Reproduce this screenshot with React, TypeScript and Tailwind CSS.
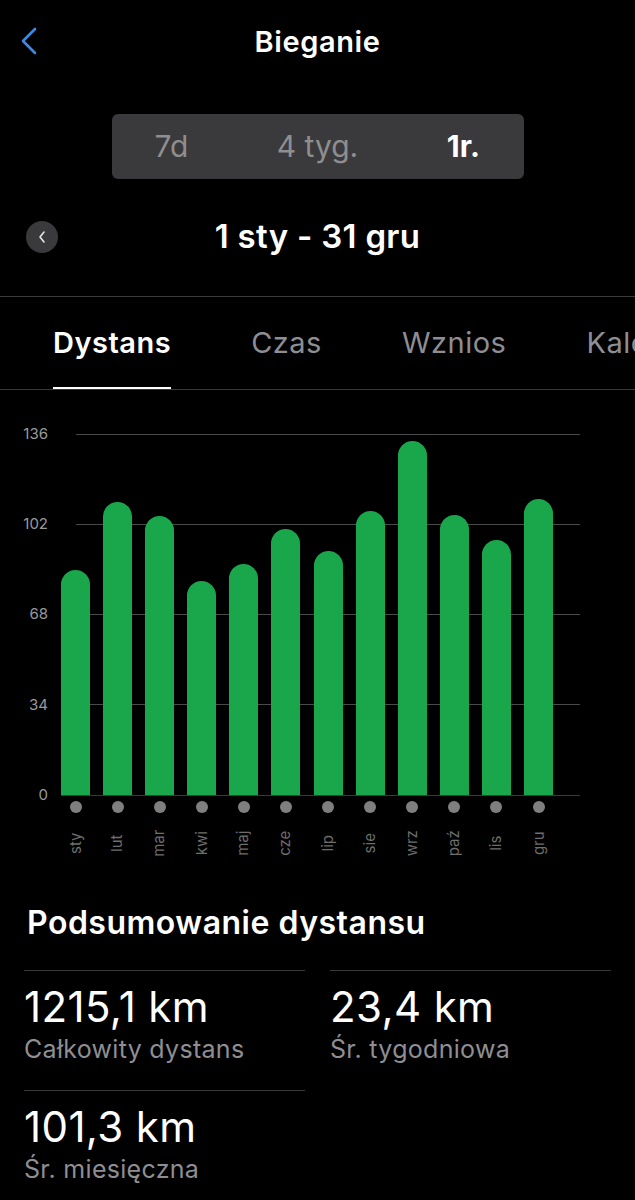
import React from "react";

const months = [
  { name: "sty", value: 84.7 },
  { name: "lut", value: 110.5 },
  { name: "mar", value: 105.2 },
  { name: "kwi", value: 80.7 },
  { name: "maj", value: 87 },
  { name: "cze", value: 100.3 },
  { name: "lip", value: 92 },
  { name: "sie", value: 107 },
  { name: "wrz", value: 133.3 },
  { name: "paź", value: 105.6 },
  { name: "lis", value: 96.2 },
  { name: "gru", value: 111.7 },
];

const ticks = [136, 102, 68, 34, 0];
const PX_PER_UNIT = 361 / 136;

function BackChevron() {
  return (
    <svg width="18" height="28" viewBox="0 0 18 28" fill="none">
      <polyline
        points="15,2 3,14 15,26"
        stroke="#3d8be6"
        strokeWidth="2.6"
        strokeLinecap="round"
        strokeLinejoin="round"
      />
    </svg>
  );
}

function SmallChevron() {
  return (
    <svg width="10" height="14" viewBox="0 0 10 14" fill="none">
      <polyline
        points="7,2 3,7 7,12"
        stroke="#e5e5e5"
        strokeWidth="1.6"
        strokeLinecap="round"
        strokeLinejoin="round"
      />
    </svg>
  );
}

function Stat({ value, label }: { value: string; label: string }) {
  return (
    <div className="border-t border-[#38383a] pt-[12px]">
      <div className="text-[42px] leading-[48px] tracking-[0.4px] text-white">{value}</div>
      <div className="mt-[3px] text-[25px] leading-[30px] tracking-[0.3px] text-[#8e8e93]">{label}</div>
    </div>
  );
}

export default function App() {
  return (
    <div
      className="min-h-[1200px] w-full overflow-hidden bg-black text-white"
      style={{ fontFamily: "Inter, 'Noto Sans', sans-serif" }}
    >
      {/* header */}
      <div className="relative flex h-[84px] items-center justify-center">
        <div className="absolute left-[20px] top-[27px]">
          <BackChevron />
        </div>
        <div className="text-[29px] font-semibold tracking-[0.6px]">Bieganie</div>
      </div>

      {/* range switch */}
      <div className="mt-[30px] flex justify-center">
        <div className="flex h-[65px] w-[412px] items-center justify-center rounded-[6px] bg-[#3a3a3c] text-[30px]">
          <div className="w-[146px] flex-none text-center text-[#8e8e8e]">7d</div>
          <div className="w-[146px] flex-none text-center text-[#8e8e8e]">4 tyg.</div>
          <div className="w-[146px] flex-none text-center font-bold text-white">1r.</div>
        </div>
      </div>

      {/* date row */}
      <div className="relative mt-[42px] flex h-[32px] items-center justify-center">
        <div className="absolute left-[26px] top-0 flex h-[32px] w-[32px] items-center justify-center rounded-full bg-[#3a3a3c]">
          <SmallChevron />
        </div>
        <div className="text-[33px] font-semibold tracking-[0.3px]">1 sty - 31 gru</div>
      </div>

      <div className="mt-[43px] h-px bg-[#3a3a3c]" />

      {/* tabs */}
      <div className="flex h-[93px] gap-[80px] overflow-hidden whitespace-nowrap border-b border-[#3a3a3c] pl-[53px] pt-[28px] text-[29px]">
        <div className="flex flex-col">
          <span className="leading-[35px] font-semibold tracking-[0.5px] text-white">Dystans</span>
          <div className="mt-[27px] h-[3px] bg-white" />
        </div>
        <span className="leading-[35px] tracking-[0.5px] text-[#8e8e93]">Czas</span>
        <span className="leading-[35px] tracking-[0.5px] text-[#8e8e93]">Wznios</span>
        <span className="leading-[35px] tracking-[0.5px] text-[#8e8e93]">Kalorie</span>
      </div>

      {/* chart */}
      <div className="relative mt-[44px] h-[361px]">
        <div className="absolute inset-0 flex flex-col justify-between pr-[55px]">
          {ticks.map((t) => (
            <div key={t} className="flex h-0 items-center">
              <div className="w-[48px] text-right text-[15px] text-[#9a9a9a]">{t}</div>
              <div className={t === 0 ? "ml-[13px] h-px flex-1 bg-[#3a3a3c]" : "ml-[28px] h-px flex-1 bg-[#4a4a4c]"} />
            </div>
          ))}
        </div>
        <div className="relative flex h-full items-end gap-[13.1px] pl-[61px]">
          {months.map((m) => (
            <div
              key={m.name}
              className="w-[29px] rounded-t-full bg-[#1aa64a]"
              style={{ height: `${m.value * PX_PER_UNIT}px` }}
            />
          ))}
        </div>
      </div>

      <div className="flex gap-[13.1px] pl-[61px]">
        {months.map((m) => (
          <div key={m.name} className="flex w-[29px] flex-col items-center">
            <div className="mt-[6px] h-[12px] w-[12px] rounded-full bg-[#7f7f7f]" />
            <div className="mt-[14px] flex h-[32px] items-center justify-center">
              <span className="-rotate-90 whitespace-nowrap text-[15px] text-[#6e6e6e]">{m.name}</span>
            </div>
          </div>
        ))}
      </div>

      {/* summary */}
      <div className="mt-[45px] px-[27px] text-[32px] font-semibold leading-[38px] tracking-[0.5px]">
        Podsumowanie dystansu
      </div>
      <div className="mt-[28px] grid grid-cols-2 gap-x-[25px] px-[24px]">
        <div>
          <Stat value="1215,1 km" label="Całkowity dystans" />
          <div className="mt-[26px]">
            <Stat value="101,3 km" label="Śr. miesięczna" />
          </div>
        </div>
        <div>
          <Stat value="23,4 km" label="Śr. tygodniowa" />
        </div>
      </div>
    </div>
  );
}
